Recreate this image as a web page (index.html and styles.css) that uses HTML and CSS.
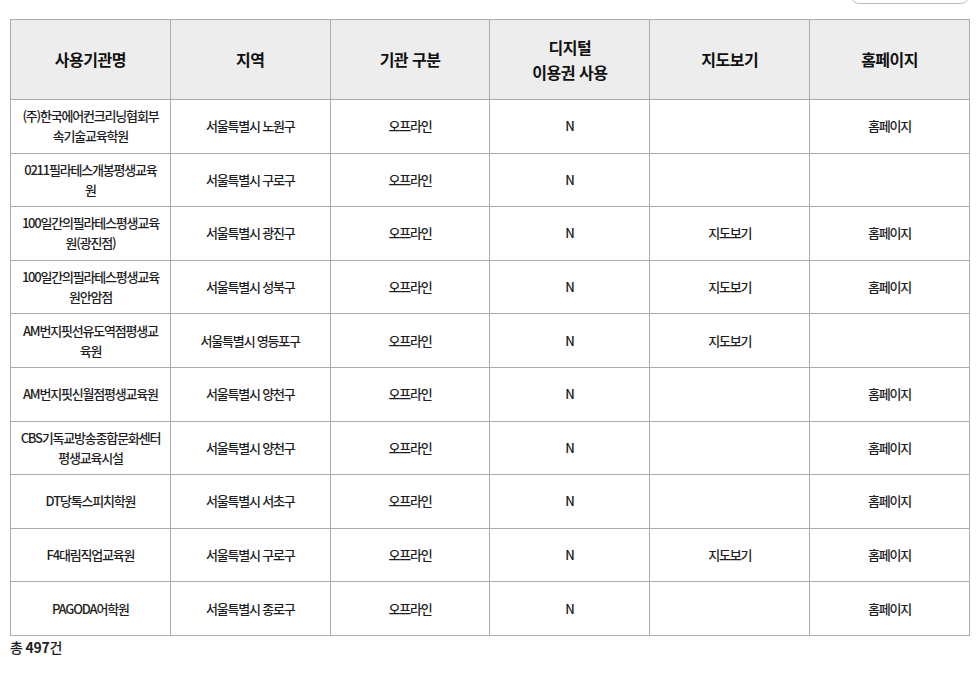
FILE: index.html
```html
<!DOCTYPE html>
<html lang="ko">
<head>
<meta charset="utf-8">
<title>사용기관 목록</title>
<link rel="stylesheet" href="styles.css">
</head>
<body>
<div class="page">
  <div class="toolbar">
    <div class="search-box"></div>
  </div>
  <table class="list">
    <colgroup>
      <col><col><col><col><col><col>
    </colgroup>
    <thead>
      <tr>
        <th>사용기관명</th>
        <th>지역</th>
        <th>기관 구분</th>
        <th>디지털<br>이용권 사용</th>
        <th>지도보기</th>
        <th>홈페이지</th>
      </tr>
    </thead>
    <tbody>
      <tr><td>(주)한국에어컨크리닝협회부<br>속기술교육학원</td><td>서울특별시 노원구</td><td>오프라인</td><td class="yn">N</td><td></td><td><a href="#">홈페이지</a></td></tr>
      <tr><td>0211필라테스개봉평생교육<br>원</td><td>서울특별시 구로구</td><td>오프라인</td><td class="yn">N</td><td></td><td></td></tr>
      <tr><td>100일간의필라테스평생교육<br>원(광진점)</td><td>서울특별시 광진구</td><td>오프라인</td><td class="yn">N</td><td><a href="#">지도보기</a></td><td><a href="#">홈페이지</a></td></tr>
      <tr><td>100일간의필라테스평생교육<br>원안암점</td><td>서울특별시 성북구</td><td>오프라인</td><td class="yn">N</td><td><a href="#">지도보기</a></td><td><a href="#">홈페이지</a></td></tr>
      <tr><td>AM번지핏선유도역점평생교<br>육원</td><td>서울특별시 영등포구</td><td>오프라인</td><td class="yn">N</td><td><a href="#">지도보기</a></td><td></td></tr>
      <tr><td>AM번지핏신월점평생교육원</td><td>서울특별시 양천구</td><td>오프라인</td><td class="yn">N</td><td></td><td><a href="#">홈페이지</a></td></tr>
      <tr><td>CBS기독교방송종합문화센터<br>평생교육시설</td><td>서울특별시 양천구</td><td>오프라인</td><td class="yn">N</td><td></td><td><a href="#">홈페이지</a></td></tr>
      <tr><td>DT당톡스피치학원</td><td>서울특별시 서초구</td><td>오프라인</td><td class="yn">N</td><td></td><td><a href="#">홈페이지</a></td></tr>
      <tr><td>F4대림직업교육원</td><td>서울특별시 구로구</td><td>오프라인</td><td class="yn">N</td><td><a href="#">지도보기</a></td><td><a href="#">홈페이지</a></td></tr>
      <tr><td>PAGODA어학원</td><td>서울특별시 종로구</td><td>오프라인</td><td class="yn">N</td><td></td><td><a href="#">홈페이지</a></td></tr>
    </tbody>
  </table>
  <p class="total">총 <strong>497</strong>건</p>
</div>
</body>
</html>
```

FILE: styles.css
```css
* { box-sizing: border-box; }

html, body {
  margin: 0;
  padding: 0;
  background: #fff;
}

body {
  font-family: "Noto Sans CJK KR", "Noto Sans", sans-serif;
  color: #222;
}

.page {
  width: 979px;
  padding: 0 10px;
}

.toolbar {
  display: flex;
  justify-content: flex-end;
  height: 19px;
  overflow: hidden;
}

.search-box {
  width: 118px;
  height: 36px;
  margin-top: -32px;
  border: 1px solid #bcbcbc;
  border-radius: 8px;
  background: #fff;
}

.list {
  width: 960px;
  table-layout: fixed;
  border-collapse: collapse;
  border: 1px solid #acacac;
}

.list th,
.list td {
  border: 1px solid #acacac;
  text-align: center;
  vertical-align: middle;
  padding: 0 4px;
  white-space: nowrap;
}

.list th {
  height: 80px;
  background: #ededed;
  font-size: 16px;
  font-weight: 700;
  line-height: 25px;
  letter-spacing: -0.5px;
  color: #111;
}

.list tbody tr {
  height: 53.6px;
}

.list td {
  font-size: 13px;
  font-weight: 500;
  line-height: 20px;
  letter-spacing: -1.2px;
  color: #1e1e1e;
}

.list td.yn {
  letter-spacing: 0;
}

.list a {
  color: #1e1e1e;
  text-decoration: none;
}

.total {
  margin: 0;
  padding-top: 1px;
  font-size: 14px;
  font-weight: 500;
  line-height: 20px;
  letter-spacing: -0.6px;
  color: #1e1e1e;
}

.total strong {
  font-weight: 700;
  letter-spacing: -0.3px;
}
```
